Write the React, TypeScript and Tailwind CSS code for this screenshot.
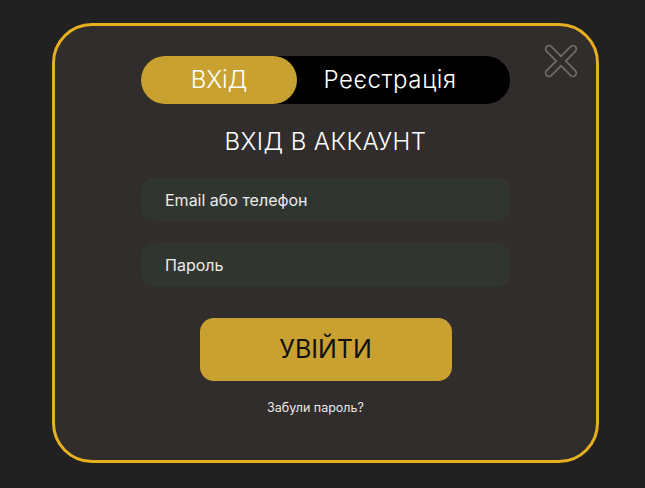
import React from "react";

function CloseIcon() {
  return (
    <svg width="38" height="38" viewBox="0 0 38 38" fill="none">
      <g strokeLinecap="round">
        <path d="M7 7 L31 31 M31 7 L7 31" stroke="#6e6b6a" strokeWidth="8.5" />
        <path d="M7 7 L31 31 M31 7 L7 31" stroke="#312d2c" strokeWidth="5" />
      </g>
    </svg>
  );
}

export default function App() {
  return (
    <div className="min-h-[488px] w-full bg-[#212121] pt-[23px] pl-[52px] font-['Inter',sans-serif]">
      <div className="relative w-[547px] h-[440px] rounded-[40px] border-[3px] border-[#e6b01e] bg-[#312d2c] flex flex-col items-center pt-[30px]">
        <button className="absolute right-[16px] top-[16px]">
          <CloseIcon />
        </button>
        <div className="w-[369px] h-[48px] rounded-full bg-black flex text-white text-[24px] font-light">
          <div className="w-[156px] rounded-full bg-[#c9a131] flex items-center justify-center">
            ВХіД
          </div>
          <div className="flex-1 flex items-center justify-center pr-[27px] tracking-[0.6px]">
            Реєстрація
          </div>
        </div>
        <h1 className="mt-[23px] text-white text-[24px] leading-[29px] font-light tracking-[0.4px]">
          ВХІД В АККАУНТ
        </h1>
        <div className="mt-[22px] w-[369px] h-[43px] rounded-[12px] bg-[#31352f] flex items-center px-[24px] text-[16px] text-[#ececec]">
          Email або телефон
        </div>
        <div className="mt-[22px] w-[369px] h-[44px] rounded-[12px] bg-[#31352f] flex items-center px-[24px] text-[16px] text-[#ececec]">
          Пароль
        </div>
        <button className="mt-[31px] w-[252px] h-[63px] rounded-[14px] bg-[#c9a131] text-[25px] text-[#111] flex items-center justify-center">
          УВІЙТИ
        </button>
        <p className="mt-[19px] mr-[20px] text-[12.5px] leading-[16px] text-[#eaeaea]">
          Забули пароль?
        </p>
      </div>
    </div>
  );
}
